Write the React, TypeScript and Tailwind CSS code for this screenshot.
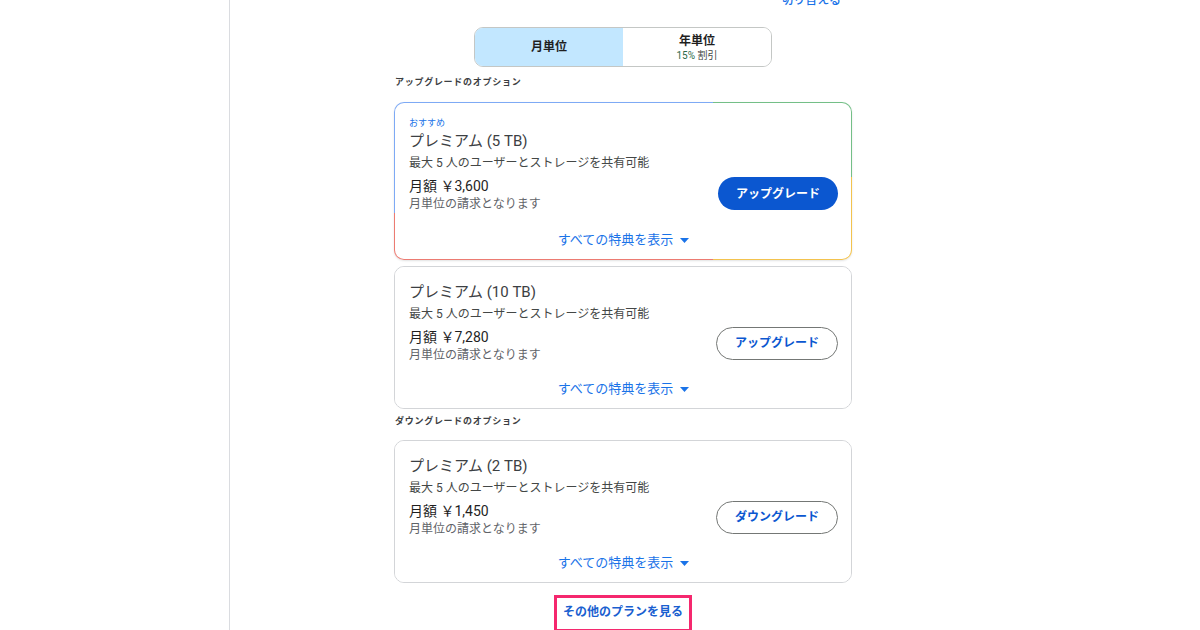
import React from 'react'

const font = { fontFamily: 'Roboto, "Noto Sans CJK JP", sans-serif' }

function Caret() {
  return (
    <svg width="9" height="5" viewBox="0 0 9 5" className="ml-[7px] inline-block">
      <path d="M0 0h9L4.5 5z" fill="#1a73e8" />
    </svg>
  )
}

type Plan = {
  name: string
  price: string
  action: string
  primary?: boolean
  recommended?: boolean
}

function PlanBody({ plan }: { plan: Plan }) {
  return (
    <div className="rounded-[9px] bg-white pl-[14px] pr-[13px] pt-[14px] pb-[9px]">
      {plan.recommended && (
        <div className="text-[9px] leading-[12px] text-[#1a73e8]">おすすめ</div>
      )}
      <div className={plan.recommended ? 'mt-[2px] text-[15px] leading-[20px] text-[#3c4043]' : 'mt-px text-[15px] leading-[20px] text-[#3c4043]'}>
        {plan.name}
      </div>
      <div className="mt-[3px] text-[12px] leading-[18px] text-[#444746]">
        最大 5 人のユーザーとストレージを共有可能
      </div>
      <div className="mt-[4px] flex items-center justify-between">
        <div>
          <div className="text-[14px] leading-[20px] text-[#1f1f1f]">月額 ￥{plan.price}</div>
          <div className="text-[12px] leading-[17px] text-[#5f6368]">月単位の請求となります</div>
        </div>
        {plan.primary ? (
          <button className="-mt-[2px] h-[33px] w-[120px] rounded-full bg-[#0b57d0] text-[12px] font-bold text-white">
            {plan.action}
          </button>
        ) : (
          <button className="-mt-[5px] h-[33px] w-[122px] rounded-full border border-[#747775] bg-white text-[12px] font-bold text-[#0b57d0]">
            {plan.action}
          </button>
        )}
      </div>
      <div
        className={
          plan.recommended
            ? 'mt-[17px] flex items-center justify-center text-[13px] leading-[20px] text-[#1a73e8]'
            : 'mt-[15px] flex items-center justify-center text-[13px] leading-[20px] text-[#1a73e8]'
        }
      >
        すべての特典を表示
        <Caret />
      </div>
    </div>
  )
}

function PlanCard({ plan }: { plan: Plan }) {
  if (plan.recommended) {
    return (
      <div className="rounded-[10px] bg-[image:conic-gradient(#7eaaf5_0deg_49deg,#74bf87_49deg_89deg,#f3c34e_89deg_131deg,#ec7b72_131deg_262deg,#7eaaf5_262deg)] p-px shadow-[0_1px_2px_rgba(60,64,67,0.15)]">
        <PlanBody plan={plan} />
      </div>
    )
  }
  return (
    <div className="rounded-[10px] border border-[#d3d5d8] bg-white">
      <PlanBody plan={plan} />
    </div>
  )
}

function SectionLabel({ children }: { children: React.ReactNode }) {
  return (
    <div className="pl-px text-[9px] font-bold leading-[14px] tracking-[0.08em] text-[#3c4043]">
      {children}
    </div>
  )
}

export default function App() {
  return (
    <div className="flex h-[630px] w-[1200px] overflow-hidden bg-white" style={font}>
      <aside className="w-[230px] shrink-0 border-r border-[#dadce0]" />
      <main className="flex-1 pl-[164px]">
        <div className="w-[458px]">
          <div className="-mt-[8px] flex justify-end pr-[11px] text-[12px] font-medium leading-[16px] text-[#1a73e8]">
            切り替える
          </div>

          <div className="mx-auto mt-[19px] flex h-[40px] w-[298px] overflow-hidden rounded-[9px] border border-[#c4c7c5]">
            <div className="flex flex-1 items-center justify-center bg-[#c2e7ff] text-[12px] font-bold text-[#1f1f1f]">
              月単位
            </div>
            <div className="flex flex-1 flex-col items-center justify-center bg-white">
              <span className="text-[12px] font-bold leading-[16px] text-[#1f1f1f]">年単位</span>
              <span className="text-[10px] leading-[13px] text-[#444746]">
                <span className="text-[#2d6a4a]">15%</span> 割引
              </span>
            </div>
          </div>

          <div className="mt-[8px]">
            <SectionLabel>アップグレードのオプション</SectionLabel>
          </div>

          <div className="mt-[13px] flex flex-col gap-[6px]">
            <PlanCard
              plan={{ name: 'プレミアム (5 TB)', price: '3,600', action: 'アップグレード', primary: true, recommended: true }}
            />
            <PlanCard plan={{ name: 'プレミアム (10 TB)', price: '7,280', action: 'アップグレード' }} />
          </div>

          <div className="mt-[5px]">
            <SectionLabel>ダウングレードのオプション</SectionLabel>
          </div>

          <div className="mt-[12px]">
            <PlanCard plan={{ name: 'プレミアム (2 TB)', price: '1,450', action: 'ダウングレード' }} />
          </div>

          <div className="mt-[12px] flex justify-center">
            <div className="border-[3px] border-[#f5286e] px-[6px] pt-[5px] pb-[8px] text-[12px] font-bold leading-[18px] text-[#1a5fd0]">
              その他のプランを見る
            </div>
          </div>
        </div>
      </main>
    </div>
  )
}
